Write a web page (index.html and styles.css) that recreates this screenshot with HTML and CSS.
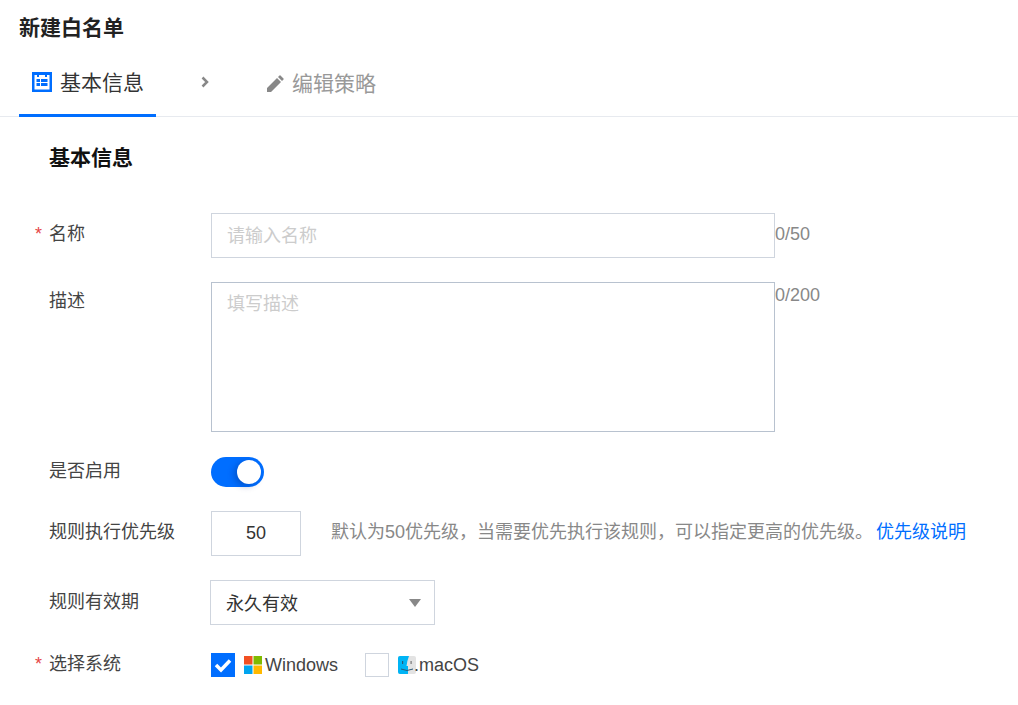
FILE: index.html
```html
<!DOCTYPE html>
<html lang="zh-CN">
<head>
<meta charset="utf-8">
<title>新建白名单</title>
<link rel="stylesheet" href="styles.css">
</head>
<body>
<header class="page-head">
  <h1 class="page-title">新建白名单</h1>
  <nav class="steps">
    <div class="step step-active">
      <svg class="step-icon" viewBox="0 0 20 20" width="20" height="20"><rect x="0" y="0" width="20" height="20" fill="#006eff"/><rect x="2.500" y="3" width="15" height="14.500" fill="#fff"/><rect x="5" y="1" width="2" height="4" fill="#006eff"/><rect x="13" y="1" width="2" height="4" fill="#006eff"/><rect x="4.500" y="7" width="11" height="3" fill="#006eff"/><rect x="4.500" y="11" width="11" height="3" fill="#006eff"/><rect x="8" y="6.500" width="1" height="8" fill="#fff"/></svg>
      <span>基本信息</span>
    </div>
    <svg class="step-arrow" viewBox="0 0 10 12" width="10" height="12"><path d="M2.500 1.500 L7 6 L2.500 10.500" fill="none" stroke="#888" stroke-width="2.500"/></svg>
    <div class="step step-next">
      <svg class="step-pen" viewBox="0 0 18 18" width="18" height="18"><path d="M1 17 L1 13 L11 3 L15 7 L5 17 Z M12 2 L13.500 0.500 Q14 0 14.500 0.500 L17.500 3.500 Q18 4 17.500 4.500 L16 6 Z" fill="#888"/></svg>
      <span>编辑策略</span>
    </div>
  </nav>
</header>

<main class="content">
  <h2 class="section-title">基本信息</h2>
  <form class="form">
    <div class="row row-name">
      <label class="label required">名称</label>
      <div class="field">
        <input class="input input-name" type="text" placeholder="请输入名称">
        <span class="count count-name">0/50</span>
      </div>
    </div>
    <div class="row row-desc">
      <label class="label">描述</label>
      <div class="field">
        <textarea class="input textarea" placeholder="填写描述"></textarea>
        <span class="count count-desc">0/200</span>
      </div>
    </div>
    <div class="row row-switch">
      <label class="label">是否启用</label>
      <div class="field">
        <span class="switch"><span class="knob"></span></span>
      </div>
    </div>
    <div class="row row-priority">
      <label class="label">规则执行优先级</label>
      <div class="field field-center">
        <input class="input input-num" type="text" value="50">
        <span class="hint">默认为50优先级，当需要优先执行该规则，可以指定更高的优先级。</span>
        <a class="link" href="#">优先级说明</a>
      </div>
    </div>
    <div class="row row-expire">
      <label class="label">规则有效期</label>
      <div class="field">
        <div class="select"><span class="select-value">永久有效</span><i class="caret"></i></div>
      </div>
    </div>
    <div class="row row-os">
      <label class="label required">选择系统</label>
      <div class="field field-center">
        <span class="check check-on"><svg viewBox="0 0 24 24" width="24" height="24"><path d="M5 12 L10 17 L19 7.500" fill="none" stroke="#fff" stroke-width="3.500"/></svg></span>
        <svg class="os-icon" viewBox="0 0 18 18" width="18" height="18"><rect width="8.500" height="8.500" fill="#f25022"/><rect x="9.500" width="8.500" height="8.500" fill="#7fba00"/><rect y="9.500" width="8.500" height="8.500" fill="#00a4ef"/><rect x="9.500" y="9.500" width="8.500" height="8.500" fill="#ffb900"/></svg>
        <span class="os-name os-win">Windows</span>
        <span class="check"></span>
        <svg class="os-icon os-mac" viewBox="0 0 18 18" width="18" height="18"><rect width="18" height="18" rx="2" fill="#e3e3e3"/><path d="M2 0 H11 Q9 5 8.500 10 H10 V18 H2 Q0 18 0 16 V2 Q0 0 2 0 Z" fill="#00b4f5"/><path d="M3 13 Q9 16 15 13" fill="none" stroke="#2a5a78" stroke-width="1"/><rect x="4" y="5" width="1.200" height="3" fill="#2a5a78"/><rect x="12.500" y="5" width="1.200" height="3" fill="#777"/></svg>
        <span class="os-name">.macOS</span>
      </div>
    </div>
  </form>
</main>
</body>
</html>
```
FILE: styles.css
```css
* { box-sizing: border-box; }
html, body { margin: 0; padding: 0; background: #fff; }
body {
  font-family: "Liberation Sans", "Noto Sans CJK SC", sans-serif;
  font-size: 18px;
  color: #444;
  width: 1018px;
  height: 705px;
  overflow: hidden;
}
.page-head { border-bottom: 1px solid #e7eaef; height: 117px; padding-top: 13px; }
.page-title { margin: 0 0 0 19px; font-size: 21px; line-height: 30px; font-weight: 700; color: #222; }
.steps { display: flex; align-items: flex-start; margin-left: 19px; margin-top: 14px; }
.step { display: flex; align-items: center; height: 60px; padding-bottom: 10px; font-size: 21px; }
.step-active { width: 137px; padding-left: 13px; color: #333; border-bottom: 3px solid #006eff; }
.step-icon { margin: 2px 8px 0 0; flex: none; }
.step-arrow { margin: 19px 0 0 44px; flex: none; }
.step-next { margin-left: 56px; color: #999; }
.step-pen { margin: 4px 8px 0 0; flex: none; }
.content { padding-left: 49px; }
.section-title { margin: 26px 0 0; font-size: 21px; line-height: 30px; font-weight: 700; color: #111; }
.form { margin-top: 40px; }
.row { display: flex; align-items: flex-start; }
.row-name, .row-priority { margin-bottom: 24px; }
.row-desc { margin-bottom: 25px; }
.row-switch { margin-bottom: 24px; }
.row-expire { margin-bottom: 28px; }
.label { position: relative; width: 162px; flex: none; line-height: 26px; color: #444; }
.row-name .label { padding-top: 8px; }
.row-desc .label { padding-top: 6px; }
.row-switch .label { padding-top: 1px; }
.row-priority .label { padding-top: 8px; }
.row-expire .label { padding-top: 9px; }
.row-os .label { padding-top: 0; margin-top: -2px; }
.required::before { content: "*"; position: absolute; left: -14px; color: #e54545; font-size: 18px; }
.field { display: flex; align-items: flex-start; }
.field-center { align-items: center; }
.input {
  display: block;
  font-family: inherit;
  font-size: 18px;
  color: #333;
  background: #fff;
  border: 1px solid #cfd5de;
  border-radius: 0;
  outline: none;
  padding: 0 15px;
}
.input::placeholder { color: #ccc; opacity: 1; }
.input-name { width: 564px; height: 45px; padding-top: 2px; }
.textarea { width: 564px; height: 150px; padding-top: 8px; line-height: 26px; resize: none; border-color: #b8c2cf; }
.count { color: #888; line-height: 26px; }
.count-name { margin-top: 8px; }
.count-desc { margin-top: 0; }
.switch { display: block; position: relative; width: 53px; height: 30px; border-radius: 15px; background: #006eff; }
.knob { position: absolute; top: 3px; right: 3px; width: 24px; height: 24px; border-radius: 50%; background: #fff; box-shadow: -3px 2px 6px rgba(0, 40, 120, .35); }
.input-num { width: 90px; height: 45px; text-align: center; padding: 0; }
.hint { margin: 0 0 8px 30px; color: #888; white-space: nowrap; }
.link { color: #006eff; text-decoration: none; margin: 0 0 8px 3px; white-space: nowrap; }
.select { display: flex; align-items: center; justify-content: space-between; width: 225px; height: 45px; margin-left: -1px; padding: 0 13px 0 15px; border: 1px solid #cfd5de; color: #333; }
.select-value { margin-bottom: 2px; }
.caret { width: 0; height: 0; border-left: 6px solid transparent; border-right: 6px solid transparent; border-top: 8px solid #888; }
.check { display: block; width: 24px; height: 24px; border: 1px solid #cfd5de; background: #fff; flex: none; }
.check-on { border: 0; background: #006eff; }
.check svg { display: block; }
.os-icon { margin-left: 9px; margin-right: 3px; flex: none; }
.os-mac { margin-left: 9px; margin-right: -2px; }
.os-name { color: #444; line-height: 24px; }
.os-win { margin-right: 27px; }
```
